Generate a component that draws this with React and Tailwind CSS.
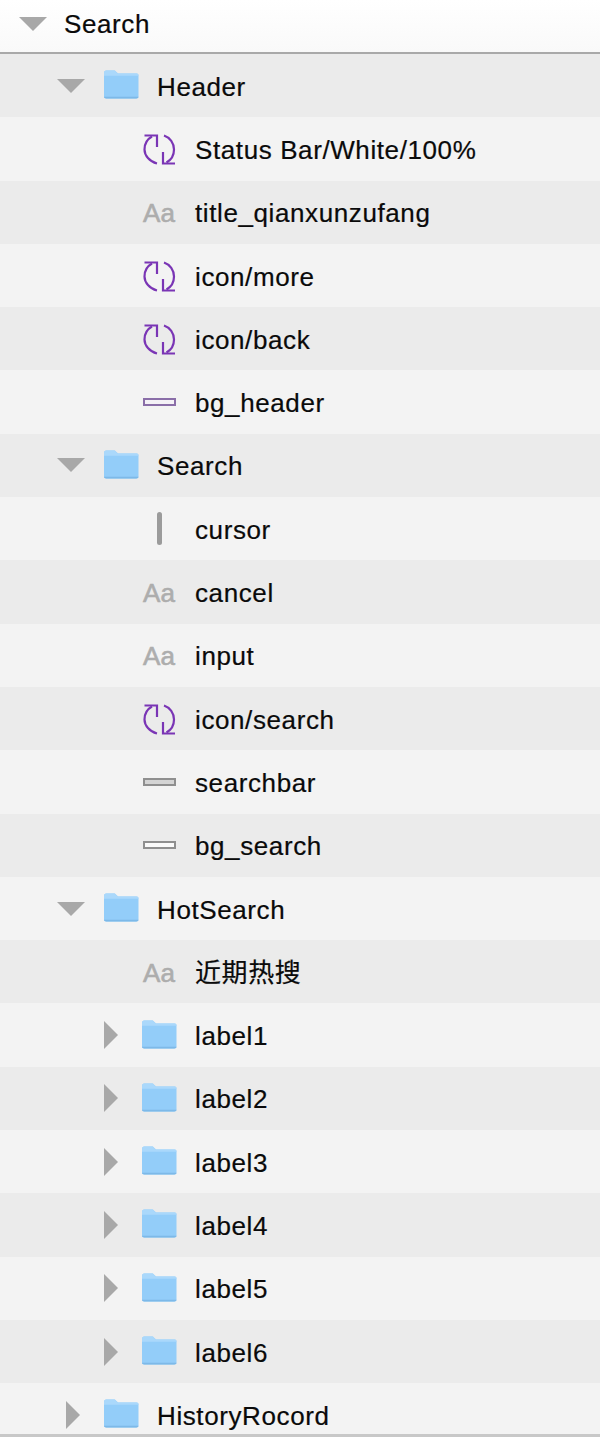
const FolderIcon = () => (
  <svg width="36" height="30" viewBox="0 0 36 30" className="shrink-0 mb-[3px]">
    <path d="M1 4C1 2.600 1.800 1.500 3.200 1.500h7.600c1 0 1.600.4 2.300 1.200L15 4.500h18.500C34.900 4.500 35.500 5.300 35.500 6.500v21c0 1.300-.8 2-2.200 2H3.200C1.800 29.500 1 28.800 1 27.500Z" fill="#93cdf9" />
    <path d="M1 6.800h34.500V6c0-.9-.8-1.500-2-1.500H15l-1.900-1.800C12.400 1.900 11.800 1.500 10.800 1.500H3.200C1.800 1.500 1 2.600 1 4Z" fill="#aad8fb" />
    <path d="M1 27.800h34.500c0 1.100-.8 1.700-2.200 1.700H3.200C1.800 29.500 1 28.900 1 27.800Z" fill="#7db9e8" />
  </svg>
)

const SymbolIcon = () => (
  <svg width="33" height="32" viewBox="0 0 33 32" fill="none" stroke="#7a35b5" strokeWidth="2.200" className="shrink-0 mt-[3px]">
    <path d="M9 2.500C4.500 5 1.500 10 1.500 15.500 1.500 21.500 6.500 27.500 14 29.500" />
    <path d="M1.500 1.500H14V13" />
    <path d="M21 1.500C27 3.500 31 9 31 15.500 31 21.500 28 26 23.500 28.500" />
    <path d="M20 18V29.500H32" />
  </svg>
)

const TextIcon = () => (
  <span className="w-[34px] pt-[2px] text-center text-[26px] tracking-normal leading-none text-[#adadad] [-webkit-text-stroke:0.6px_#adadad]">Aa</span>
)

const RectIcon = ({ fill }) => {
  const styles = {
    purple: 'border-[#8a6ea8] bg-[#f4f1f6]',
    gray: 'border-[#8f8f8f] bg-[#d4d4d4]',
    white: 'border-[#8f8f8f] bg-[#fafafa]',
  }
  return <div className={`w-[33px] h-[8px] border-2 ${styles[fill]}`} />
}

const Arrow = ({ open }) => (
  open ? (
    <div className="w-0 h-0 border-l-[14px] border-r-[14px] border-t-[14px] border-l-transparent border-r-transparent border-t-[#a8a8a8]" />
  ) : (
    <div className="w-0 h-0 border-t-[14px] border-b-[14px] border-l-[14px] border-t-transparent border-b-transparent border-l-[#a8a8a8]" />
  )
)

const rows = [
  { type: 'group', label: 'Header' },
  { type: 'symbol', label: 'Status Bar/White/100%' },
  { type: 'text', label: 'title_qianxunzufang' },
  { type: 'symbol', label: 'icon/more' },
  { type: 'symbol', label: 'icon/back' },
  { type: 'rect', label: 'bg_header', fill: 'purple' },
  { type: 'group', label: 'Search' },
  { type: 'cursor', label: 'cursor' },
  { type: 'text', label: 'cancel' },
  { type: 'text', label: 'input' },
  { type: 'symbol', label: 'icon/search' },
  { type: 'rect', label: 'searchbar', fill: 'gray' },
  { type: 'rect', label: 'bg_search', fill: 'white' },
  { type: 'group', label: 'HotSearch' },
  { type: 'text', label: '近期热搜' },
  { type: 'label', label: 'label1' },
  { type: 'label', label: 'label2' },
  { type: 'label', label: 'label3' },
  { type: 'label', label: 'label4' },
  { type: 'label', label: 'label5' },
  { type: 'label', label: 'label6' },
  { type: 'closed', label: 'HistoryRocord' },
]

function Row({ row, odd }) {
  const bg = odd ? 'bg-[#ebebeb]' : 'bg-[#f3f3f3]'

  if (row.type === 'group') {
    return (
      <div className={`flex items-center shrink-0 h-[63.3px] ${bg}`}>
        <div className="ml-[57px] mr-[18px]"><Arrow open /></div>
        <FolderIcon />
        <span className="ml-[18px] pt-[3px]">{row.label}</span>
      </div>
    )
  }

  if (row.type === 'label' || row.type === 'closed') {
    return (
      <div className={`flex items-center shrink-0 h-[63.3px] ${bg}`}>
        <div className={row.type === 'label' ? 'ml-[104px] mr-[23px]' : 'ml-[66px] mr-[23px]'}><Arrow /></div>
        <FolderIcon />
        <span className="ml-[18px] pt-[3px]">{row.label}</span>
      </div>
    )
  }

  return (
    <div className={`flex items-center shrink-0 h-[63.3px] ${bg}`}>
      <div className="w-[34px] ml-[142px] flex justify-center">
        {row.type === 'symbol' && <SymbolIcon />}
        {row.type === 'text' && <TextIcon />}
        {row.type === 'rect' && <RectIcon fill={row.fill} />}
        {row.type === 'cursor' && <div className="w-[5px] h-[33px] rounded-full bg-[#9b9b9b]" />}
      </div>
      <span className="ml-[19px] pt-[3px]">{row.label}</span>
    </div>
  )
}

export default function App() {
  return (
    <div className="flex flex-col w-[600px] h-[1437px] overflow-hidden bg-[#f3f3f3] text-[26px] tracking-[0.6px] text-[#0a0a0a] [-webkit-text-stroke:0.2px_#0a0a0a] font-['Liberation_Sans','Noto_Sans_CJK_SC',sans-serif]">
      {/* Top row */}
      <div className="flex items-center shrink-0 h-[54px] bg-gradient-to-b from-white to-[#f9f9f9] border-b-2 border-[#a9a9a9]">
        <div className="ml-[19px] mb-[5px]"><Arrow open /></div>
        <span className="ml-[17px] mb-[4px]">Search</span>
      </div>

      <div className="flex flex-col h-[1380px] overflow-hidden">
        {rows.map((row, i) => (
          <Row key={row.label + i} row={row} odd={i % 2 === 0} />
        ))}
      </div>

      {/* Bottom edge */}
      <div className="h-[3px] bg-[#c8c8c8]" />
    </div>
  )
}
